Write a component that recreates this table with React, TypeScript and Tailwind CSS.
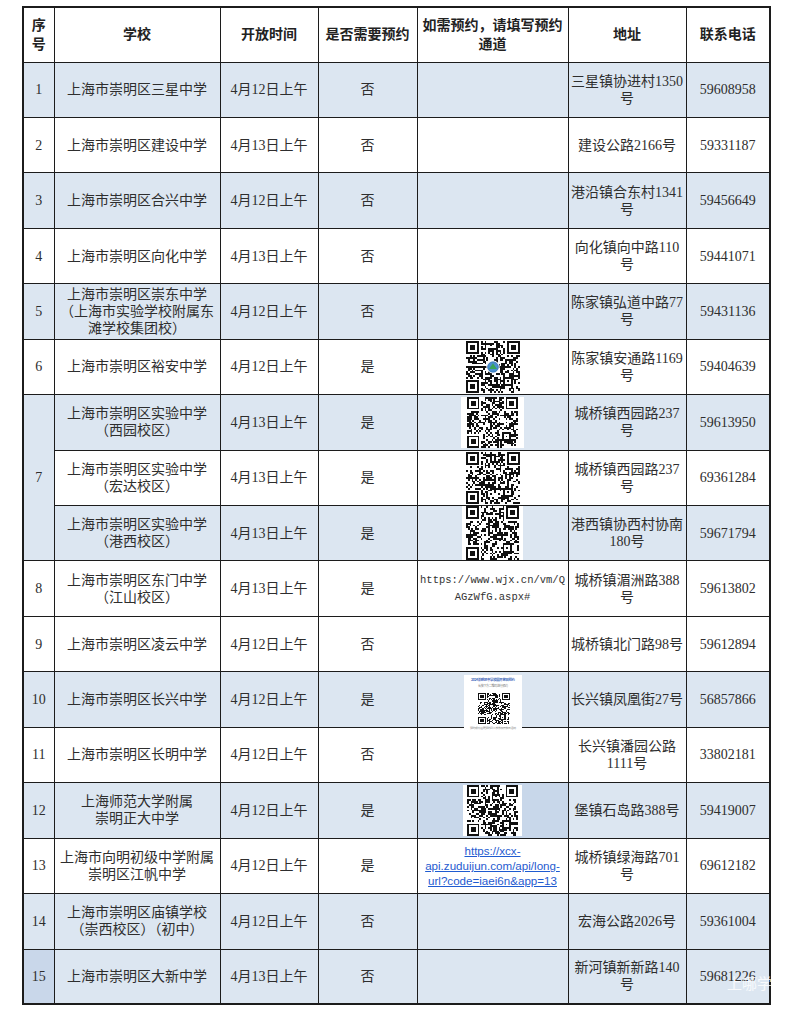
import type { ReactNode } from "react";

function rng(seed: number) {
  let a = seed;
  return () => {
    a |= 0;
    a = (a + 0x6d2b79f5) | 0;
    let t = Math.imul(a ^ (a >>> 15), 1 | a);
    t = (t + Math.imul(t ^ (t >>> 7), 61 | t)) ^ t;
    return ((t ^ (t >>> 14)) >>> 0) / 4294967296;
  };
}

function qrPath(seed: number, n: number) {
  const r = rng(seed);
  const g: boolean[][] = [];
  for (let y = 0; y < n; y++) {
    g.push([]);
    for (let x = 0; x < n; x++) g[y].push(r() > 0.5);
  }
  const finder = (oy: number, ox: number) => {
    for (let i = -1; i <= 7; i++)
      for (let j = -1; j <= 7; j++) {
        const y = oy + i;
        const x = ox + j;
        if (y < 0 || x < 0 || y >= n || x >= n) continue;
        const inside = i >= 0 && i <= 6 && j >= 0 && j <= 6;
        g[y][x] =
          inside &&
          (i === 0 || i === 6 || j === 0 || j === 6 || (i >= 2 && i <= 4 && j >= 2 && j <= 4));
      }
  };
  finder(0, 0);
  finder(0, n - 7);
  finder(n - 7, 0);
  for (let k = 8; k < n - 8; k++) {
    g[6][k] = k % 2 === 0;
    g[k][6] = k % 2 === 0;
  }
  const c = n - 7;
  for (let i = -2; i <= 2; i++)
    for (let j = -2; j <= 2; j++)
      g[c + i][c + j] = Math.max(Math.abs(i), Math.abs(j)) !== 1;
  let d = "";
  for (let y = 0; y < n; y++)
    for (let x = 0; x < n; x++) if (g[y][x]) d += `M${x} ${y}h1v1h-1z`;
  return d;
}

function QR({ seed, w, h, logo = false }: { seed: number; w: number; h: number; logo?: boolean }) {
  const n = 29;
  return (
    <svg width={w} height={h} viewBox={`0 0 ${n} ${n}`} preserveAspectRatio="none" shapeRendering="crispEdges" className="block">
      <rect width={n} height={n} fill="#fff" />
      <path d={qrPath(seed, n)} fill="#111" />
      {logo && (
        <g shapeRendering="auto">
          <circle cx={14.5} cy={14.5} r={3.6} fill="#fff" />
          <circle cx={14.5} cy={14.5} r={2.9} fill="#4b8fd0" />
          <path d="M12.4 15.6 L14.5 12.4 L16.6 15.6 Z" fill="#3aa55a" />
          <circle cx={14.5} cy={14.5} r={2.9} fill="none" stroke="#2d6fb0" strokeWidth={0.4} />
        </g>
      )}
    </svg>
  );
}

function QrBox({ seed, w, h, px, logo }: { seed: number; w: number; h: number; px: string; logo?: boolean }) {
  return (
    <div className="flex h-[54px] items-center justify-center">
      <div className={`bg-white ${px}`}>
        <QR seed={seed} w={w} h={h} logo={logo} />
      </div>
    </div>
  );
}

function Card() {
  return (
    <div className="flex h-[54px] justify-center">
      <div className="mt-[2px] h-[58px] w-[58px] bg-white">
        <svg width={58} height={58} viewBox="0 0 58 58" className="block">
          <text x={29} y={6} textAnchor="middle" fontSize={3.4} fill="#3b64b8" fontFamily="Noto Sans CJK SC, sans-serif" fontWeight={700} textLength={44}>
            2024崇明区中学校园开放日预约
          </text>
          <text x={29} y={12} textAnchor="middle" fontSize={3} fill="#777" fontFamily="Noto Sans CJK SC, sans-serif" textLength={30}>
            长按下方二维码进行预约
          </text>
          <g transform="translate(14 18)">
            <QR seed={1010} w={32} h={31} />
          </g>
          <text x={29} y={54} textAnchor="middle" fontSize={2.8} fill="#888" fontFamily="Noto Sans CJK SC, sans-serif" textLength={46}>
            预约成功后凭预约码入校参加开放日活动
          </text>
        </svg>
      </div>
    </div>
  );
}

type Row = {
  no?: string;
  span?: number;
  school: string[];
  date: string;
  need: string;
  channel?: ReactNode;
  addr: string[];
  phone: string;
  blue?: boolean;
  chBg?: string;
  noBg?: string;
};

const rows: Row[] = [
  { no: "1", school: ["上海市崇明区三星中学"], date: "4月12日上午", need: "否", addr: ["三星镇协进村1350", "号"], phone: "59608958", blue: true },
  { no: "2", school: ["上海市崇明区建设中学"], date: "4月13日上午", need: "否", addr: ["建设公路2166号"], phone: "59331187" },
  { no: "3", school: ["上海市崇明区合兴中学"], date: "4月12日上午", need: "否", addr: ["港沿镇合东村1341", "号"], phone: "59456649", blue: true },
  { no: "4", school: ["上海市崇明区向化中学"], date: "4月13日上午", need: "否", addr: ["向化镇向中路110", "号"], phone: "59441071" },
  { no: "5", school: ["上海市崇明区崇东中学", "（上海市实验学校附属东", "滩学校集团校）"], date: "4月12日上午", need: "否", addr: ["陈家镇弘道中路77", "号"], phone: "59431136", blue: true },
  { no: "6", school: ["上海市崇明区裕安中学"], date: "4月12日上午", need: "是", channel: <QrBox seed={6} w={54} h={52} px="px-[4px]" logo />, addr: ["陈家镇安通路1169", "号"], phone: "59404639" },
  { no: "7", span: 3, school: ["上海市崇明区实验中学", "（西园校区）"], date: "4月13日上午", need: "是", channel: <QrBox seed={71} w={51} h={51} px="px-[6px]" />, addr: ["城桥镇西园路237", "号"], phone: "59613950", blue: true },
  { school: ["上海市崇明区实验中学", "（宏达校区）"], date: "4月13日上午", need: "是", channel: <QrBox seed={72} w={54} h={52} px="px-[3px]" />, addr: ["城桥镇西园路237", "号"], phone: "69361284" },
  { school: ["上海市崇明区实验中学", "（港西校区）"], date: "4月13日上午", need: "是", channel: <QrBox seed={73} w={53} h={54} px="px-[4px]" />, addr: ["港西镇协西村协南", "180号"], phone: "59671794", blue: true },
  {
    no: "8",
    school: ["上海市崇明区东门中学", "（江山校区）"],
    date: "4月13日上午",
    need: "是",
    channel: (
      <div className="font-['Liberation_Mono',monospace] text-[10.5px] leading-[17px] text-[#333]">
        https://www.wjx.cn/vm/Q
        <br />
        AGzWfG.aspx#
      </div>
    ),
    addr: ["城桥镇湄洲路388", "号"],
    phone: "59613802",
  },
  { no: "9", school: ["上海市崇明区凌云中学"], date: "4月12日上午", need: "否", addr: ["城桥镇北门路98号"], phone: "59612894" },
  { no: "10", school: ["上海市崇明区长兴中学"], date: "4月12日上午", need: "是", channel: <Card />, addr: ["长兴镇凤凰街27号"], phone: "56857866", blue: true },
  { no: "11", school: ["上海市崇明区长明中学"], date: "4月12日上午", need: "否", addr: ["长兴镇潘园公路", "1111号"], phone: "33802181" },
  { no: "12", school: ["上海师范大学附属", "崇明正大中学"], date: "4月12日上午", need: "是", channel: <QrBox seed={12} w={51} h={51} px="px-[4px]" />, addr: ["堡镇石岛路388号"], phone: "59419007", blue: true, chBg: "bg-[#c8d7ea]" },
  {
    no: "13",
    school: ["上海市向明初级中学附属", "崇明区江帆中学"],
    date: "4月12日上午",
    need: "是",
    channel: (
      <div className="font-['Liberation_Sans',sans-serif] text-[11.6px] leading-[15px] text-[#1f5bd0] underline">
        https://xcx-
        <br />
        api.zuduijun.com/api/long-
        <br />
        url?code=iaei6n&amp;app=13
      </div>
    ),
    addr: ["城桥镇绿海路701", "号"],
    phone: "69612182",
  },
  { no: "14", school: ["上海市崇明区庙镇学校", "（崇西校区）（初中）"], date: "4月12日上午", need: "否", addr: ["宏海公路2026号"], phone: "59361004", blue: true },
  { no: "15", school: ["上海市崇明区大新中学"], date: "4月13日上午", need: "否", addr: ["新河镇新新路140", "号"], phone: "59681226", blue: true, noBg: "bg-[#c9d7ea]" },
];

const td = "border border-[#1c1c1c] p-0 text-center align-middle";

function Lines({ items }: { items: string[] }) {
  return (
    <div className="leading-[17px]">
      {items.map((t, i) => (
        <div key={i} className="whitespace-nowrap">
          {t}
        </div>
      ))}
    </div>
  );
}

export default function App() {
  return (
    <div className="relative min-h-[1012px] w-[790px] bg-white pt-[6px] pl-[22px]">
      <table className="w-[747px] table-fixed border-collapse border-2 border-[#1c1c1c] font-['Liberation_Serif','Noto_Sans_CJK_SC',serif] text-[14px] text-[#2e2e2e]">
        <colgroup>
          <col className="w-[31px]" />
          <col className="w-[166px]" />
          <col className="w-[98px]" />
          <col className="w-[99px]" />
          <col className="w-[151px]" />
          <col className="w-[118px]" />
          <col className="w-[84px]" />
        </colgroup>
        <thead>
          <tr className="h-[55px] font-bold text-[#222]">
            <th className={`${td} leading-[19px]`}>
              序
              <br />号
            </th>
            <th className={td}>学校</th>
            <th className={td}>开放时间</th>
            <th className={td}>是否需要预约</th>
            <th className={`${td} leading-[19px]`}>
              如需预约，请填写预约
              <br />
              通道
            </th>
            <th className={td}>地址</th>
            <th className={td}>联系电话</th>
          </tr>
        </thead>
        <tbody>
          {rows.map((r, i) => {
            const bg = r.blue ? "bg-[#dce6f1]" : "bg-white";
            return (
              <tr key={i} className={`h-[55.45px] ${bg}`}>
                {r.no !== undefined && (
                  <td rowSpan={r.span} className={`${td} ${r.noBg ?? (r.span ? "bg-[#dce6f1]" : "")}`}>
                    {r.no}
                  </td>
                )}
                <td className={td}>
                  <Lines items={r.school} />
                </td>
                <td className={td}>{r.date}</td>
                <td className={td}>{r.need}</td>
                <td className={`${td} ${r.chBg ?? ""}`}>{r.channel}</td>
                <td className={td}>
                  <Lines items={r.addr} />
                </td>
                <td className={td}>{r.phone}</td>
              </tr>
            );
          })}
        </tbody>
      </table>
      <div className="absolute left-[727px] top-[972px] font-['Noto_Sans_CJK_SC',sans-serif] text-[15px] text-white/80">
        上哪学
      </div>
    </div>
  );
}
